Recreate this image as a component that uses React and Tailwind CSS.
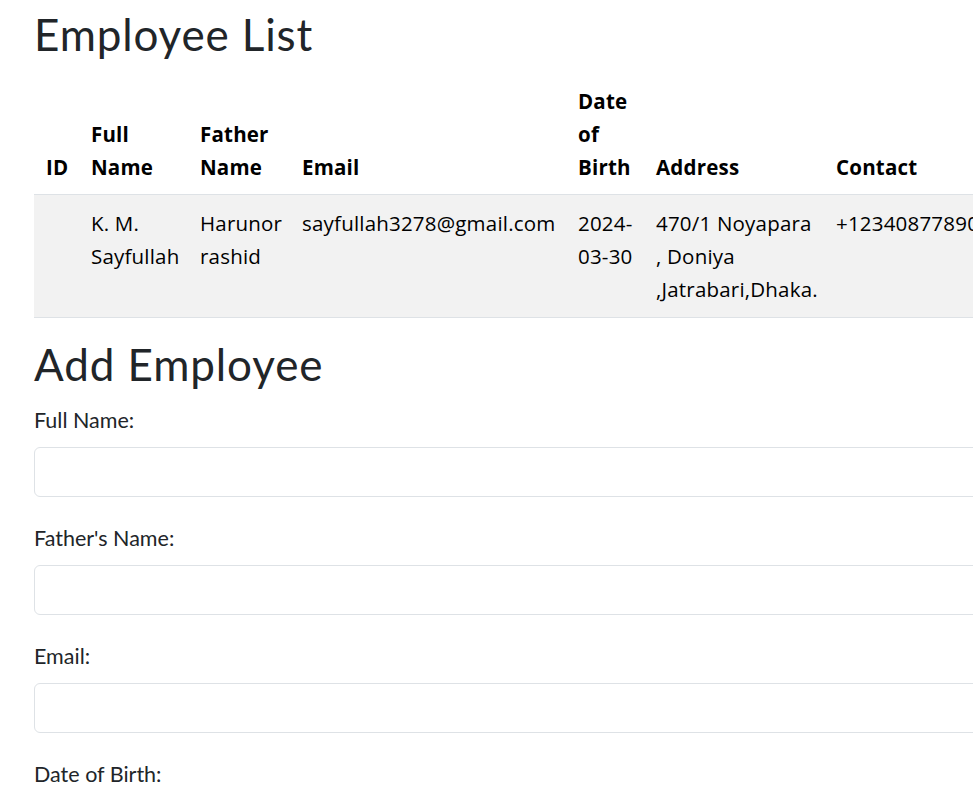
import React from 'react';

const employees = [
    {
        id: '',
        name: ['K. M.', 'Sayfullah'],
        father: ['Harunor', 'rashid'],
        email: 'sayfullah3278@gmail.com',
        dob: ['2024-', '03-30'],
        address: ['470/1 Noyapara', ', Doniya', ',Jatrabari,Dhaka.'],
        contact: '+12340877890',
    },
];

const Lines = ({ parts }) => parts.map((p, i) => (
    <React.Fragment key={i}>
        {i > 0 && <br />}
        {p}
    </React.Fragment>
));

const Field = ({ label }) => (
    <div className="mb-[26px]">
        <label className="block text-[21.5px] leading-[30px] text-[#212529]">{label}</label>
        <input
            type="text"
            className="mt-[12px] block w-full h-[50px] rounded-[6px] border border-[#dee2e6] bg-white px-3 outline-none"
        />
    </div>
);

const App = () => {
    const headCell = "px-3 pt-3 pb-[10px] text-left align-bottom font-bold";
    const bodyCell = "px-3 pt-3 pb-[11px] align-top";

    return (
        <div className="w-full overflow-x-hidden bg-white min-h-[790px]">
            <div className="w-[1150px] pl-[34px] font-['Lato','Noto_Sans',sans-serif] text-[#212529]">
                <h1 className="mt-[8px] text-[44px] leading-[53px] font-normal tracking-[0.85px]">Employee List</h1>

                <table className="mt-[12px] w-[1080px] table-fixed border-collapse font-['Open_Sans',sans-serif] text-[20.5px] leading-[33px] tracking-[0.2px] text-black">
                    <thead>
                        <tr className="border-b border-[#dee2e6]">
                            <th className={`${headCell} w-[45px]`}>ID</th>
                            <th className={`${headCell} w-[109px]`}>Full<br />Name</th>
                            <th className={`${headCell} w-[102px]`}>Father<br />Name</th>
                            <th className={`${headCell} w-[276px]`}>Email</th>
                            <th className={`${headCell} w-[78px]`}>Date<br />of<br />Birth</th>
                            <th className={`${headCell} w-[180px]`}>Address</th>
                            <th className={headCell}>Contact</th>
                        </tr>
                    </thead>
                    <tbody>
                        {employees.map((e, i) => (
                            <tr key={i} className="bg-[#f2f2f2] border-b border-[#dee2e6]">
                                <td className={bodyCell}>{e.id}</td>
                                <td className={`${bodyCell} whitespace-nowrap`}><Lines parts={e.name} /></td>
                                <td className={`${bodyCell} whitespace-nowrap`}><Lines parts={e.father} /></td>
                                <td className={`${bodyCell} whitespace-nowrap`}>{e.email}</td>
                                <td className={`${bodyCell} whitespace-nowrap`}><Lines parts={e.dob} /></td>
                                <td className={`${bodyCell} whitespace-nowrap`}><Lines parts={e.address} /></td>
                                <td className={`${bodyCell} whitespace-nowrap`}>{e.contact}</td>
                            </tr>
                        ))}
                    </tbody>
                </table>

                <h1 className="mt-[20px] text-[44px] leading-[53px] font-normal tracking-[0.9px]">Add Employee</h1>

                <form className="mt-[14px] w-[1080px]">
                    <Field label="Full Name:" />
                    <Field label="Father's Name:" />
                    <Field label="Email:" />
                    <Field label="Date of Birth:" />
                </form>
            </div>
        </div>
    );
};

export default App;
